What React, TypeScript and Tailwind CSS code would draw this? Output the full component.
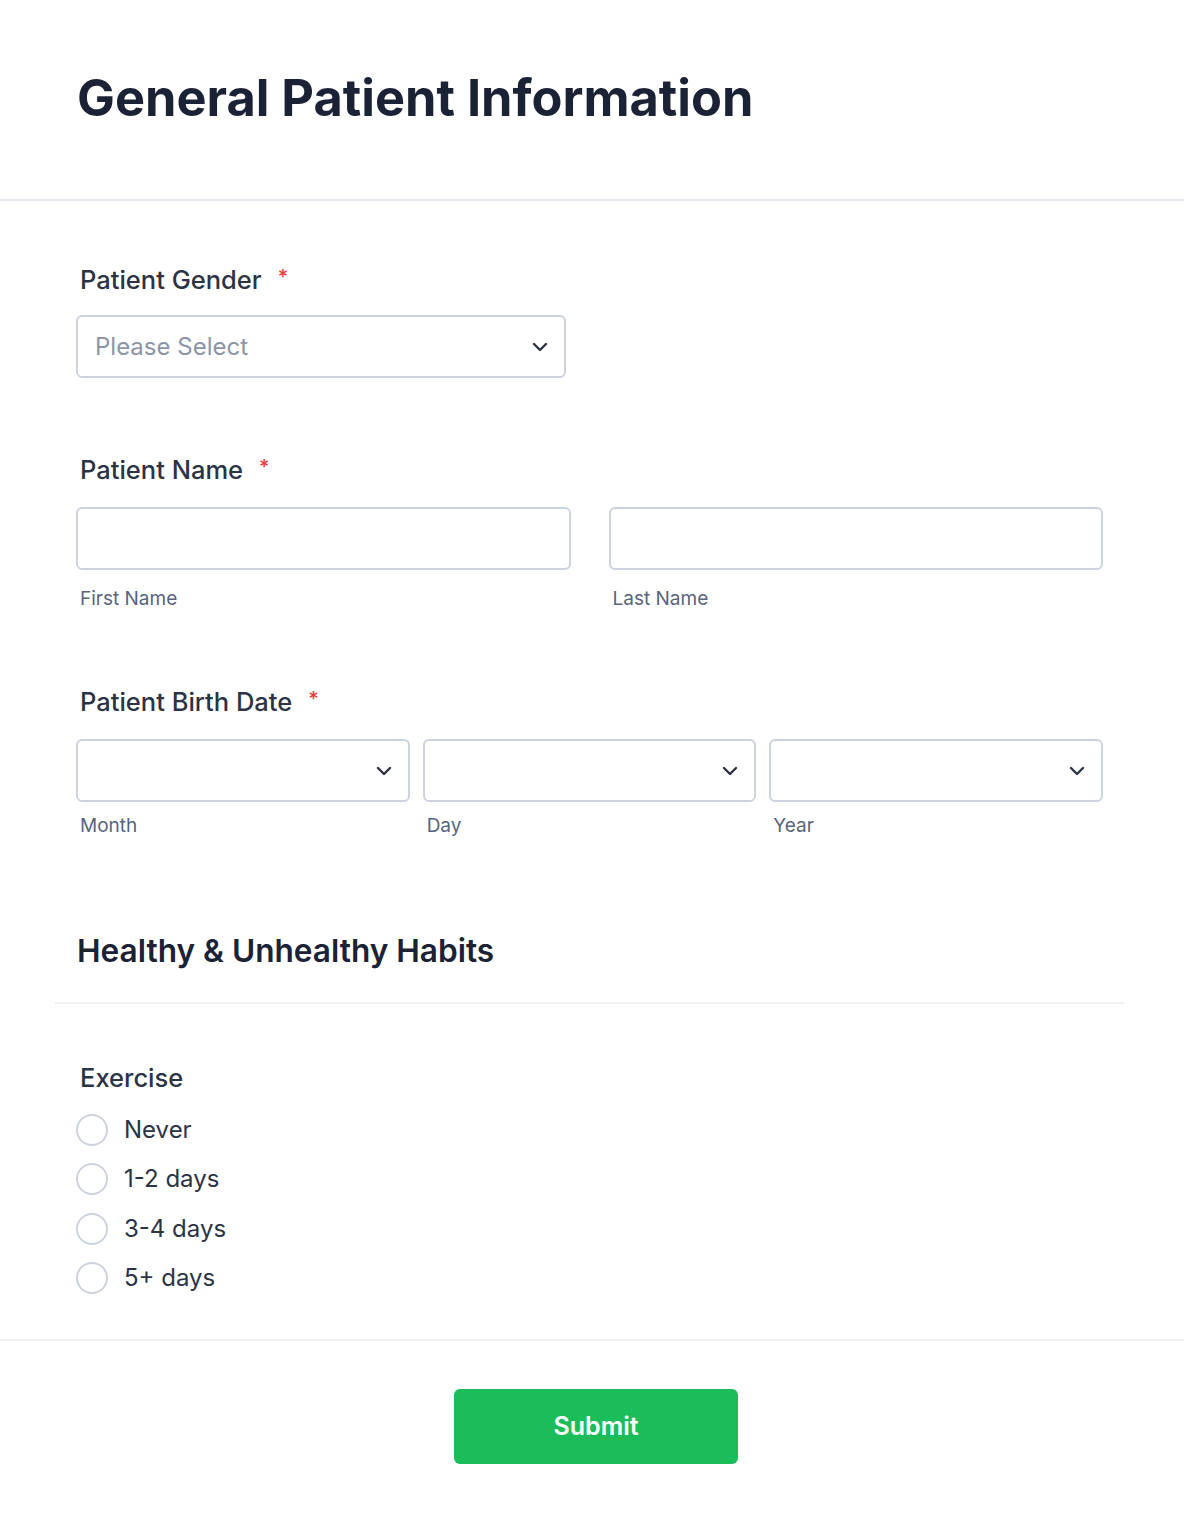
const Chevron = () => (
  <svg width="16" height="10" viewBox="0 0 16 10" fill="none" className="shrink-0">
    <path d="M2 2l6 6 6-6" stroke="#2c3345" strokeWidth="2.4" strokeLinecap="round" strokeLinejoin="round" />
  </svg>
);

const Label = ({ children, required }: { children: string; required?: boolean }) => (
  <div className="flex items-start h-[32px] text-[25.5px] leading-[32px] font-medium text-[#2c3345] pl-[4px]">
    <span>{children}</span>
    {required && <span className="text-[20px] leading-[26px] text-[#f23a3c] ml-[16px]">*</span>}
  </div>
);

const SelectBox = ({ placeholder, className }: { placeholder?: string; className?: string }) => (
  <div
    className={
      "h-[63px] border-2 border-[#cdd2dd] rounded-[6px] bg-white flex items-center justify-between pl-[17px] pr-[16px] " +
      (className || "")
    }
  >
    <span className="text-[24px] text-[#8c95a8]">{placeholder}</span>
    <Chevron />
  </div>
);

const SubLabel = ({ children }: { children: string }) => (
  <div className="text-[19px] leading-[24px] text-[#57647e] pl-[4px]">{children}</div>
);

const Radio = ({ label }: { label: string }) => (
  <div className="flex items-center h-[49.5px]">
    <div className="w-[32px] h-[32px] rounded-full border-2 border-[#cdd2dd] bg-white" />
    <span className="ml-[16px] text-[24px] text-[#2c3345]">{label}</span>
  </div>
);

export default function App() {
  return (
    <div className="w-[1184px] min-h-[1516px] bg-white font-['Inter',sans-serif]">
      <header className="h-[201px] border-b-2 border-[#e6e8ef] px-[77px] pt-[66px]">
        <h1 className="text-[50.5px] leading-[64px] font-bold text-[#1b2235]">
          General Patient Information
        </h1>
      </header>

      <main className="pl-[76px] pr-[81px] pt-[63px]">
        <Label required>Patient Gender</Label>
        <SelectBox placeholder="Please Select" className="w-[490px] mt-[19px]" />

        <div className="mt-[76px]">
          <Label required>Patient Name</Label>
          <div className="grid grid-cols-2 gap-[38px] mt-[21px]">
            <div>
              <div className="h-[63px] border-2 border-[#cdd2dd] rounded-[6px]" />
              <div className="mt-[17px]">
                <SubLabel>First Name</SubLabel>
              </div>
            </div>
            <div>
              <div className="h-[63px] border-2 border-[#cdd2dd] rounded-[6px]" />
              <div className="mt-[17px]">
                <SubLabel>Last Name</SubLabel>
              </div>
            </div>
          </div>
        </div>

        <div className="mt-[75px]">
          <Label required>Patient Birth Date</Label>
          <div className="grid grid-cols-3 gap-[13px] mt-[21px]">
            {["Month", "Day", "Year"].map((s) => (
              <div key={s}>
                <SelectBox />
                <div className="mt-[12px]">
                  <SubLabel>{s}</SubLabel>
                </div>
              </div>
            ))}
          </div>
        </div>
      </main>

      <section className="mt-[93px] pl-[55px] pr-[60px]">
        <h2 className="pl-[22px] text-[31.6px] leading-[40px] font-semibold text-[#1b2235]">
          Healthy &amp; Unhealthy Habits
        </h2>
        <div className="mt-[31px] h-[2px] bg-[#eef0f4]" />
      </section>

      <section className="px-[76px] pt-[58px] pb-[36px]">
        <Label>Exercise</Label>
        <div className="mt-[11px]">
          {["Never", "1-2 days", "3-4 days", "5+ days"].map((r) => (
            <Radio key={r} label={r} />
          ))}
        </div>
      </section>

      <div className="border-t-2 border-[#eef0f4] flex justify-center pt-[48px] pl-[8px]">
        <button className="w-[284px] h-[75px] rounded-[6px] bg-[#1bbd5a] text-white text-[25px] font-semibold">
          Submit
        </button>
      </div>
    </div>
  );
}
